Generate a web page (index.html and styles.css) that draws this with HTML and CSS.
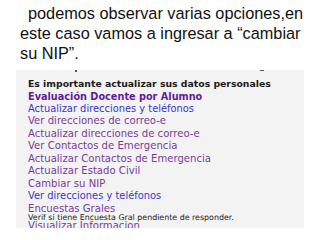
FILE: index.html
```html
<!DOCTYPE html>
<html lang="es">
<head>
<meta charset="utf-8">
<link rel="stylesheet" href="styles.css">
</head>
<body>
<p class="intro"><span class="indent"></span>podemos observar varias opciones,en este caso vamos a ingresar a “cambiar su NIP”.</p>
<div class="panel">
  <div class="marks"><span class="mark m1"></span><span class="mark m2"></span></div>
  <div class="row head">Es importante actualizar sus datos personales</div>
  <div class="row big">Evaluación Docente por Alumno</div>
  <div class="row blue">Actualizar direcciones y teléfonos</div>
  <div class="row link">Ver direcciones de correo-e</div>
  <div class="row link">Actualizar direcciones de correo-e</div>
  <div class="row link">Ver Contactos de Emergencia</div>
  <div class="row link">Actualizar Contactos de Emergencia</div>
  <div class="row link">Actualizar Estado Civil</div>
  <div class="row link">Cambiar su NIP</div>
  <div class="row blue">Ver direcciones y teléfonos</div>
  <div class="row link enc">Encuestas Grales</div>
  <div class="row note">Verif si tiene Encuesta Gral pendiente de responder.</div>
  <div class="row link last">Visualizar Informacion</div>
</div>
</body>
</html>
```
FILE: styles.css
```css
html, body {
  margin: 0;
  padding: 0;
  background: #ffffff;
  width: 320px;
  height: 240px;
  overflow: hidden;
}
.intro {
  margin: 0;
  padding: 3px 8px 0 20px;
  font-family: "Liberation Sans", Arial, sans-serif;
  font-size: 16.3px;
  line-height: 20px;
  color: #111;
  height: 70px;
  box-sizing: border-box;
}
.indent {
  display: inline-block;
  width: 8px;
}
.panel {
  margin-left: 16px;
  width: 288px;
  height: 158px;
  background: #f3f3f3;
  padding-left: 12px;
  box-sizing: border-box;
  overflow: hidden;
  font-family: "DejaVu Sans", Verdana, sans-serif;
  font-size: 10.1px;
}
.marks {
  position: relative;
  height: 8px;
}
.mark {
  position: absolute;
  top: 0;
  height: 2px;
  background: #555;
}
.m1 { left: 47px; width: 2px; }
.m2 { left: 232px; width: 4px; top: -1px; }
.row {
  line-height: 12.45px;
  white-space: nowrap;
}
.head {
  font-weight: bold;
  color: #1a1a1a;
  font-size: 9.3px;
  line-height: 12px;
}
.big {
  font-weight: bold;
  color: #661b99;
  font-family: "DejaVu Sans Condensed", "DejaVu Sans", sans-serif;
  font-stretch: condensed;
  font-size: 10.8px;
  line-height: 13px;
}
.blue {
  color: #3838c8;
  font-size: 9.9px;
}
.link {
  color: #7a3aa0;
}
.enc {
  line-height: 11px;
}
.note {
  font-size: 7.9px;
  line-height: 7.5px;
  color: #222;
}
.last {
  line-height: 10px;
}
```
